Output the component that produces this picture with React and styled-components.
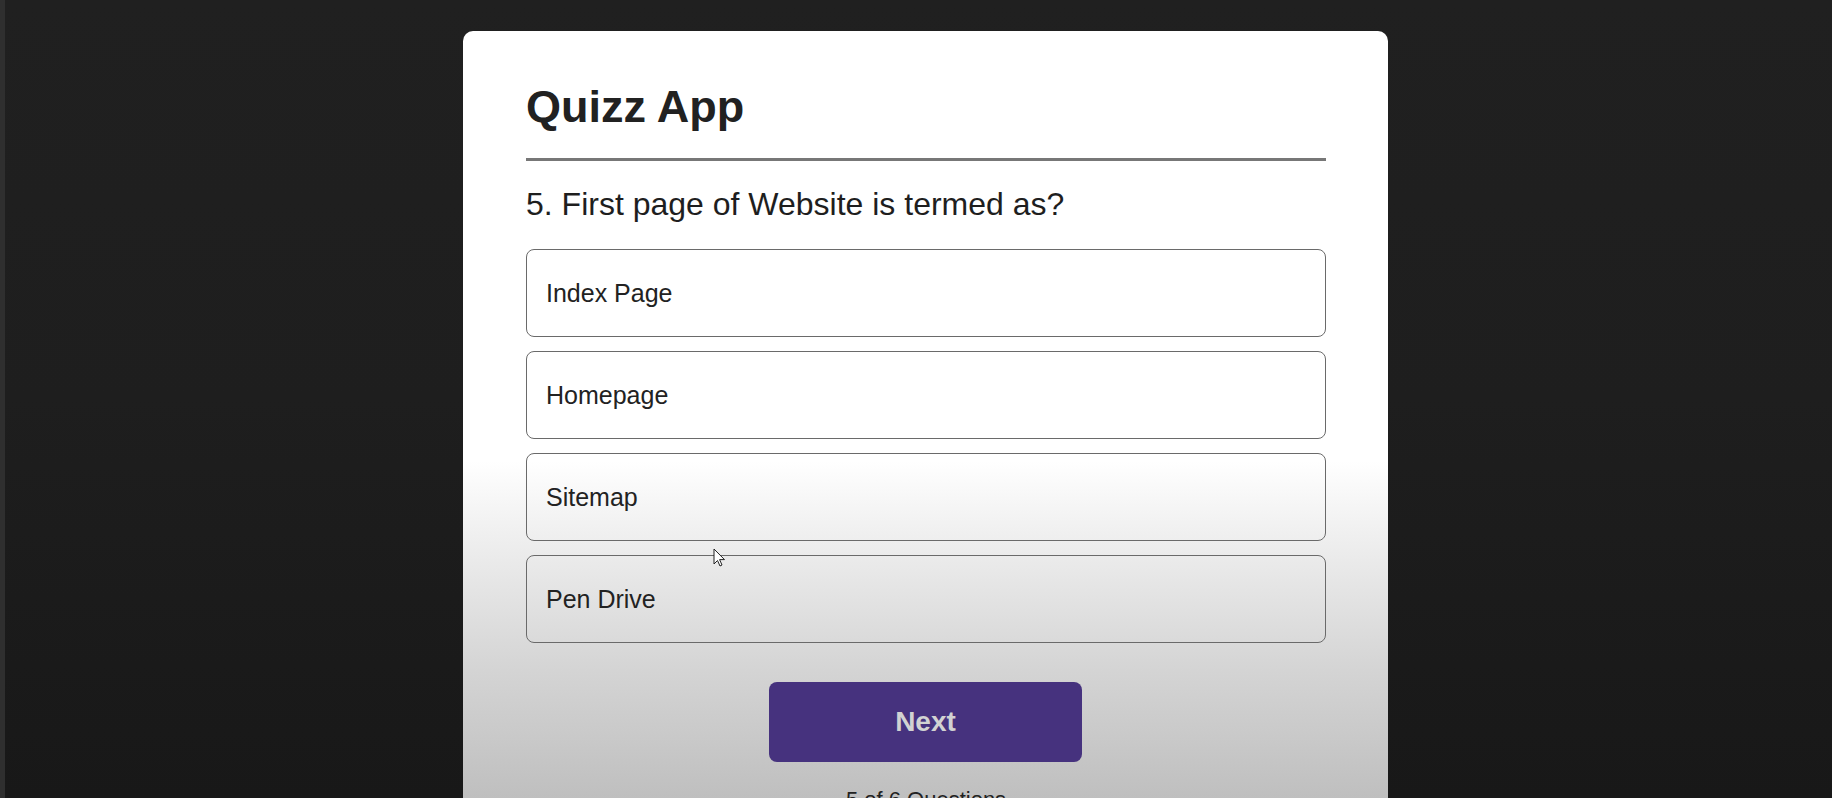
import React from 'react';
import styled, { createGlobalStyle } from 'styled-components';

const GlobalStyle = createGlobalStyle`
  html, body {
    margin: 0;
    padding: 0;
    height: 100%;
    overflow: hidden;
  }
  body {
    background: linear-gradient(to bottom, #202020 0%, #1e1e1e 50%, #181818 100%);
    font-family: "Liberation Sans", Arial, sans-serif;
  }
`;

const questions = [
  { q: 'First page of Website is termed as?', options: ['Index Page', 'Homepage', 'Sitemap', 'Pen Drive'] },
];

export default function App() {
  const current = 5;
  const total = 6;
  const item = questions[0];

  return (
    <Page>
      <GlobalStyle />
      <Card>
        <Title>Quizz App</Title>
        <Divider />
        <Question>
          {current}. {item.q}
        </Question>
        <OptionList>
          {item.options.map((opt) => (
            <Option key={opt}>{opt}</Option>
          ))}
        </OptionList>
        <NextButton>Next</NextButton>
        <Counter>
          {current} of {total} Questions
        </Counter>
        <Cursor width="14" height="20" viewBox="0 0 14 20">
          <path d="M1 1 L1 16 L4.5 12.5 L7 18 L9 17 L6.6 11.6 L11.5 11.6 Z" fill="#fff" stroke="#222" strokeWidth="1" />
        </Cursor>
      </Card>
    </Page>
  );
}

const Page = styled.div`
  min-height: 798px;
  box-sizing: border-box;
  border-left: 5px solid #2f2f2f;
  display: flex;
  justify-content: center;
  align-items: flex-start;
  padding: 31px 0 0 14px;
`;

const Card = styled.div`
  position: relative;
  width: 925px;
  height: 820px;
  box-sizing: border-box;
  padding: 54px 62px 0 63px;
  border-radius: 10px;
  background: linear-gradient(to bottom, #ffffff 0px, #ffffff 430px, #ececec 520px, #d4d4d4 640px, #bfbfbf 767px, #bcbcbc 820px);
  display: flex;
  flex-direction: column;
`;

const Title = styled.h1`
  margin: 0;
  font-size: 45px;
  line-height: 44px;
  font-weight: 700;
  color: #212121;
`;

const Divider = styled.div`
  height: 3px;
  background: #777;
  margin-top: 29px;
`;

const Question = styled.h2`
  margin: 27px 0 0;
  font-size: 32px;
  line-height: 32px;
  font-weight: 400;
  color: #1e1e1e;
`;

const OptionList = styled.div`
  display: flex;
  flex-direction: column;
  gap: 14px;
  margin-top: 29px;
`;

const Option = styled.button`
  height: 88px;
  box-sizing: border-box;
  display: flex;
  align-items: center;
  padding: 0 19px;
  border: 1px solid #6a6a6a;
  border-radius: 8px;
  background: transparent;
  font-family: "Liberation Sans", Arial, sans-serif;
  font-size: 25px;
  color: #222;
  text-align: left;
  cursor: pointer;
`;

const NextButton = styled.button`
  align-self: center;
  width: 313px;
  height: 80px;
  margin: 39px 1px 0 0;
  border: none;
  border-radius: 8px;
  background: #46327e;
  color: #d2d2d2;
  font-family: "Liberation Sans", Arial, sans-serif;
  font-size: 28px;
  font-weight: 700;
  cursor: pointer;
`;

const Counter = styled.div`
  margin-top: 27px;
  text-align: center;
  font-size: 22px;
  line-height: 22px;
  color: #222;
`;

const Cursor = styled.svg`
  position: absolute;
  left: 250px;
  top: 517px;
`;
